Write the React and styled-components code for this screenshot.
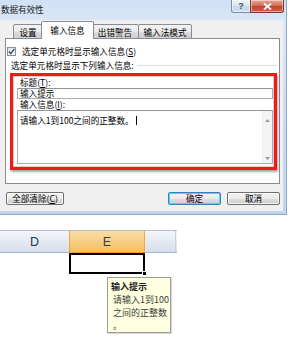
import React from "react";
import styled, { createGlobalStyle } from "styled-components";

const GlobalStyle = createGlobalStyle`
  html, body { margin: 0; padding: 0; background: #fff; }
  body {
    font-family: "Noto Sans CJK SC", "Liberation Sans", sans-serif;
    width: 308px; height: 346px; overflow: hidden;
  }
  * { box-sizing: border-box; }
`;

const Page = styled.div`
  width: 308px;
  height: 346px;
  display: flex;
  flex-direction: column;
`;

const Window = styled.div`
  width: 287px;
  display: flex;
  flex-direction: column;
  background: linear-gradient(#cfe1f5, #dbe8f7 12%, #c9dbf0 60%, #c3d6ee);
  border-right: 1px solid #8ea7c6;
  border-bottom: 1px solid #8ea7c6;
`;

const TitleBar = styled.div`
  height: 20px;
  display: flex;
  align-items: flex-start;
`;

const TitleText = styled.div`
  padding: 3px 0 0 1px;
  font-size: 8.6px;
  line-height: 12px;
  color: #1a1a1a;
  letter-spacing: -0.1px;
`;

const CaptionButtons = styled.div`
  margin-left: auto;
  margin-right: 2px;
  display: flex;
`;

const CaptionButton = styled.div`
  width: ${(p) => p.$w}px;
  height: 13px;
  display: flex;
  align-items: center;
  justify-content: center;
  border: 1px solid ${(p) => (p.$close ? "#7a3a30" : "#7a8fab")};
  border-top: none;
  border-radius: ${(p) => (p.$close ? "0 0 3px 0" : "0 0 0 3px")};
  margin-left: ${(p) => (p.$close ? "-1px" : "0")};
  background: ${(p) =>
    p.$close
      ? "linear-gradient(#e9a898, #d2705d 45%, #c4432c 55%, #d3634a)"
      : "linear-gradient(#eef3f9, #dbe5f1 45%, #c6d5e8 55%, #d3e0ef)"};
  color: ${(p) => (p.$close ? "#fff" : "#3d4f68")};
  font-family: "Liberation Sans", sans-serif;
  font-weight: bold;
  font-size: ${(p) => (p.$close ? "9px" : "9px")};
  line-height: 1;
  box-shadow: inset 0 0 0 1px rgba(255, 255, 255, 0.45);
`;

const Client = styled.div`
  margin: 0 3px 3px 0;
  background: #f0f0f0;
  padding: 0 3px 6px 5px;
  display: flex;
  flex-direction: column;
`;

const TabStrip = styled.div`
  height: 19px;
  margin-bottom: -1px;
  padding-left: 8px;
  display: flex;
  align-items: flex-end;
`;

const Tab = styled.div`
  position: relative;
  z-index: ${(p) => (p.$active ? 2 : 0)};
  width: ${(p) => p.$w + (p.$active ? 4 : 0)}px;
  height: ${(p) => (p.$active ? 18 : 15)}px;
  margin: 0 ${(p) => (p.$active ? -2 : 0)}px 0 ${(p) => (p.$active ? -2 : -1)}px;
  border: 1px solid #898c95;
  border-bottom: ${(p) => (p.$active ? "none" : "1px solid #898c95")};
  border-radius: 2px 2px 0 0;
  background: ${(p) =>
    p.$active ? "#fff" : "linear-gradient(#f3f3f3, #ebebeb 50%, #dddddd 51%, #cfcfcf)"};
  display: flex;
  justify-content: center;
  padding-top: ${(p) => (p.$active ? 2 : 1)}px;
  font-size: 8.6px;
  line-height: 12px;
  color: #000;
  &:first-child { margin-left: 0; }
`;

const Panel = styled.div`
  position: relative;
  z-index: 1;
  height: 146px;
  border: 1px solid #898c95;
  background: #fff;
  display: flex;
  flex-direction: column;
`;

const CheckRow = styled.label`
  margin: 6px 0 0 1px;
  height: 12px;
  display: flex;
  align-items: center;
  gap: 6px;
  font-size: 8.6px;
  line-height: 12px;
  color: #000;
`;

const CheckBox = styled.span`
  width: 9px;
  height: 9px;
  border: 1px solid #8e8f8f;
  background: linear-gradient(135deg, #dcdcdc, #fdfdfd);
  display: flex;
  align-items: center;
  justify-content: center;
`;

const Key = styled.span`
  text-decoration: underline;
`;

const GroupHeading = styled.div`
  margin-top: 2px;
  height: 12px;
  padding-left: 5px;
  display: flex;
  align-items: center;
  font-size: 8.6px;
  line-height: 12px;
  color: #000;
  &::after {
    content: "";
    flex: 1;
    margin: 2px 2px 0 3px;
    border-top: 1px solid #d5dfe5;
    border-bottom: 1px solid #fff;
  }
`;

const RedBox = styled.div`
  margin: 2px 0 0 4px;
  width: 267px;
  height: 97px;
  border: 3px solid #f01a1a;
  box-shadow: 1px 2px 2px rgba(0, 0, 0, 0.35), inset 0 0 0 1px rgba(160, 40, 40, 0.25);
  padding: 1px 1px 3px 4px;
  display: flex;
  flex-direction: column;
`;

const FieldLabel = styled.div`
  height: 11px;
  padding-left: 3px;
  font-size: 8.6px;
  line-height: 11px;
  color: #000;
`;

const TextBox = styled.div`
  height: 11px;
  border: 1px solid #abadb3;
  border-top-color: #8e939c;
  padding-left: 2px;
  font-size: 8.6px;
  line-height: 9px;
  color: #000;
`;

const TextArea = styled.div`
  height: 54px;
  border: 1px solid #abadb3;
  border-top-color: #8e939c;
  display: flex;
`;

const AreaText = styled.div`
  flex: 1;
  padding: 3px 0 0 2px;
  font-size: 8.6px;
  line-height: 12px;
  color: #000;
  display: flex;
  align-items: flex-start;
`;

const Caret = styled.span`
  display: inline-block;
  width: 1px;
  height: 9px;
  margin: 2px 0 0 2px;
  background: #000;
`;

const ScrollBar = styled.div`
  width: 10px;
  background: #f4f4f4;
  border-left: 1px solid #ececec;
  display: flex;
  flex-direction: column;
  justify-content: space-between;
  padding: 5px 0 1px;
`;

const ScrollArrow = styled.div`
  height: 8px;
  display: flex;
  align-items: center;
  justify-content: center;
`;

const ButtonRow = styled.div`
  margin-top: 8px;
  height: 13px;
  display: flex;
  gap: 6px;
`;

const Button = styled.div`
  width: ${(p) => p.$w}px;
  height: 13px;
  margin-left: ${(p) => p.$ml || 0}px;
  border: 1px solid ${(p) => (p.$default ? "#3c7fb1" : "#707070")};
  border-radius: 2px;
  background: linear-gradient(#f2f2f2, #ebebeb 50%, #dddddd 51%, #cfcfcf);
  box-shadow: ${(p) =>
    p.$default ? "inset 0 0 0 1px #48d6f8" : "inset 0 0 0 1px rgba(255,255,255,0.7)"};
  display: flex;
  align-items: center;
  justify-content: center;
  font-size: 8.6px;
  line-height: 11px;
  color: #000;
`;

const Spacer = styled.div`
  flex: 1;
`;

const Sheet = styled.div`
  margin-top: 15px;
  display: flex;
  flex-direction: column;
`;

const HeaderRow = styled.div`
  width: 177px;
  height: 23px;
  display: flex;
  border-top: 1px solid #b9bec6;
  border-bottom: 1px solid #9eb6ce;
  background: linear-gradient(#f3f6fa, #e4eaf3 50%, #d6deea);
`;

const ColHeader = styled.div`
  width: ${(p) => p.$w}px;
  display: flex;
  align-items: center;
  justify-content: center;
  font-family: "Liberation Sans", sans-serif;
  font-size: 12.5px;
  color: ${(p) => (p.$selected ? "#3b3b3b" : "#27364a")};
  border-right: 1px solid ${(p) => (p.$selected ? "#f2a548" : "#c5d2e3")};
  border-left: ${(p) => (p.$selected ? "1px solid #f2a548" : "none")};
  margin-left: ${(p) => (p.$selected ? "-1px" : "0")};
  background: ${(p) =>
    p.$selected ? "linear-gradient(#f9dca5, #f6cf85 50%, #f1c060)" : "transparent"};
  margin-bottom: ${(p) => (p.$selected ? "-1px" : "0")};
  border-bottom: ${(p) => (p.$selected ? "1px solid #f29a35" : "none")};
`;

const CellRow = styled.div`
  height: 21px;
  display: flex;
`;

const Cell = styled.div`
  position: relative;
  width: ${(p) => p.$w}px;
  border: ${(p) => (p.$selected ? "2px solid #000" : "none")};
`;

const FillHandle = styled.div`
  position: absolute;
  right: -4px;
  bottom: -4px;
  width: 5px;
  height: 5px;
  background: #000;
  border: 1px solid #fff;
`;

const Tooltip = styled.div`
  margin: 3px 0 0 107px;
  width: 64px;
  height: 56px;
  background: #ffffe1;
  border: 1px solid #9c9c9c;
  box-shadow: 1px 1px 1px rgba(0, 0, 0, 0.15);
  padding: 2px 2px 0 3px;
  font-size: 9px;
  line-height: 13px;
  color: #3c3c3c;
`;

const TipTitle = styled.div`
  font-weight: bold;
  color: #1a1a1a;
`;

const TipLine = styled.div`
  padding-left: 2px;
  white-space: nowrap;
`;

const tabs = [
  { label: "设置", w: 30 },
  { label: "输入信息", w: 49, active: true },
  { label: "出错警告", w: 48 },
  { label: "输入法模式", w: 54 },
];

export default function App() {
  return (
    <Page>
      <GlobalStyle />
      <Window>
        <TitleBar>
          <TitleText>数据有效性</TitleText>
          <CaptionButtons>
            <CaptionButton $w={20}>?</CaptionButton>
            <CaptionButton $w={34} $close>
              <svg width="9" height="7" viewBox="0 0 9 7">
                <path d="M1 0.5 L8 6.5 M8 0.5 L1 6.5" stroke="#fff" strokeWidth="1.8" />
              </svg>
            </CaptionButton>
          </CaptionButtons>
        </TitleBar>
        <Client>
          <TabStrip>
            {tabs.map((t) => (
              <Tab key={t.label} $w={t.w} $active={t.active}>
                {t.label}
              </Tab>
            ))}
          </TabStrip>
          <Panel>
            <CheckRow>
              <CheckBox>
                <svg width="7" height="7" viewBox="0 0 7 7">
                  <path d="M0.8 3.6 L2.8 5.6 L6.3 1" stroke="#3b4f8c" strokeWidth="1.4" fill="none" />
                </svg>
              </CheckBox>
              <span>
                选定单元格时显示输入信息(<Key>S</Key>)
              </span>
            </CheckRow>
            <GroupHeading>选定单元格时显示下列输入信息:</GroupHeading>
            <RedBox>
              <FieldLabel>
                标题(<Key>T</Key>):
              </FieldLabel>
              <TextBox>输入提示</TextBox>
              <FieldLabel>
                输入信息(<Key>I</Key>):
              </FieldLabel>
              <TextArea>
                <AreaText>
                  请输入1到100之间的正整数。
                  <Caret />
                </AreaText>
                <ScrollBar>
                  <ScrollArrow>
                    <svg width="5" height="3" viewBox="0 0 5 3">
                      <path d="M0 3 L2.5 0 L5 3 Z" fill="#9a9a9a" />
                    </svg>
                  </ScrollArrow>
                  <ScrollArrow>
                    <svg width="5" height="3" viewBox="0 0 5 3">
                      <path d="M0 0 L2.5 3 L5 0 Z" fill="#9a9a9a" />
                    </svg>
                  </ScrollArrow>
                </ScrollBar>
              </TextArea>
            </RedBox>
          </Panel>
          <ButtonRow>
            <Button $w={58} $ml={1}>
              全部清除(<Key>C</Key>)
            </Button>
            <Spacer />
            <Button $w={53} $default>
              确定
            </Button>
            <Button $w={53}>取消</Button>
          </ButtonRow>
        </Client>
      </Window>
      <Sheet>
        <HeaderRow>
          <ColHeader $w={70}>D</ColHeader>
          <ColHeader $w={76} $selected>
            E
          </ColHeader>
          <ColHeader $w={31} />
        </HeaderRow>
        <CellRow>
          <Cell $w={69} />
          <Cell $w={76} $selected>
            <FillHandle />
          </Cell>
        </CellRow>
        <Tooltip>
          <TipTitle>输入提示</TipTitle>
          <TipLine>请输入1到100</TipLine>
          <TipLine>之间的正整数</TipLine>
          <TipLine>。</TipLine>
        </Tooltip>
      </Sheet>
    </Page>
  );
}
